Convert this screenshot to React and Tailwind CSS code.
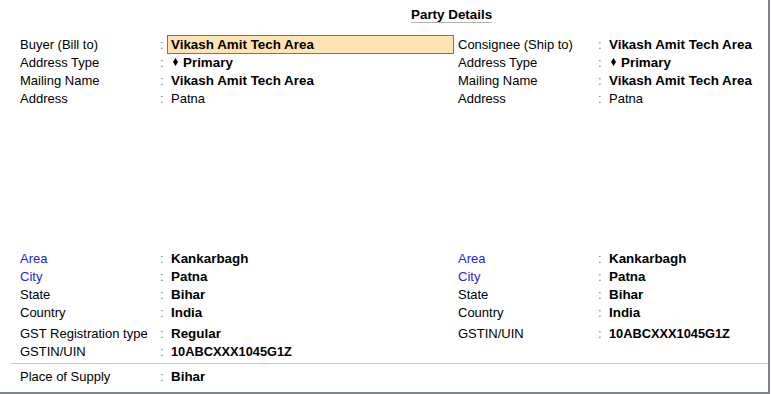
import React from "react";

const Diamond = () => (
  <svg width="5" height="8" viewBox="0 0 5 8" className="mr-[5px] ml-[2px] mt-[-3px]">
    <polygon points="2.5,0 5,4 2.5,8 0,4" fill="#000" />
  </svg>
);

function Row({ label, value, blue, bold = true, highlight, diamond, narrow }) {
  return (
    <div className="flex h-[18px] items-center leading-[18px]">
      <div className={`w-[140px] shrink-0 ${blue ? "text-[#2323e6]" : "text-black"}`}>{label}</div>
      <div className="w-[11px] shrink-0 text-[#7a7a7a]">:</div>
      {highlight ? (
        <div className="ml-[-4px] mt-[-1px] flex h-[19px] w-[287px] items-center border border-[#3d82c4] bg-[#fde4b2] pl-[3px] text-[13.4px] font-bold">
          {value}
        </div>
      ) : (
        <div
          className={`flex items-center whitespace-nowrap ${
            bold ? (narrow ? "text-[12.8px] font-bold" : "text-[13.4px] font-bold") : ""
          }`}
        >
          {diamond && <Diamond />}
          {value}
        </div>
      )}
    </div>
  );
}

export default function App() {
  return (
    <div
      className="h-[394px] w-[770px] border-b-2 border-r-2 border-[#7b8590] bg-white text-[13px] text-black"
      style={{ fontFamily: '"Liberation Sans", Arial, sans-serif' }}
    >
      <div className="flex pl-[411px] pt-[7px]">
        <div className="border-b border-[#b4b4b4] text-[13.4px] font-bold leading-[15px]">Party Details</div>
      </div>

      <div className="mt-[13px] flex pl-[20px]">
        <div className="w-[438px] shrink-0">
          <Row label="Buyer (Bill to)" value="Vikash Amit Tech Area" highlight />
          <Row label="Address Type" value="Primary" diamond />
          <Row label="Mailing Name" value="Vikash Amit Tech Area" />
          <Row label="Address" value="Patna" bold={false} />
        </div>
        <div className="flex-1">
          <Row label="Consignee (Ship to)" value="Vikash Amit Tech Area" />
          <Row label="Address Type" value="Primary" diamond />
          <Row label="Mailing Name" value="Vikash Amit Tech Area" />
          <Row label="Address" value="Patna" bold={false} />
        </div>
      </div>

      <div className="mt-[142px] flex pl-[20px]">
        <div className="w-[438px] shrink-0">
          <Row label="Area" value="Kankarbagh" blue />
          <Row label="City" value="Patna" blue />
          <Row label="State" value="Bihar" />
          <Row label="Country" value="India" />
          <div className="mt-[3px]">
            <Row label="GST Registration type" value="Regular" />
            <Row label="GSTIN/UIN" value="10ABCXXX1045G1Z" narrow />
          </div>
        </div>
        <div className="flex-1">
          <Row label="Area" value="Kankarbagh" blue />
          <Row label="City" value="Patna" blue />
          <Row label="State" value="Bihar" />
          <Row label="Country" value="India" />
          <div className="mt-[3px]">
            <Row label="GSTIN/UIN" value="10ABCXXX1045G1Z" narrow />
          </div>
        </div>
      </div>

      <div className="ml-[10px] mt-[2px] border-t border-[#c8c8c8] pl-[10px] pt-[4px]">
        <Row label="Place of Supply" value="Bihar" />
      </div>
    </div>
  );
}
